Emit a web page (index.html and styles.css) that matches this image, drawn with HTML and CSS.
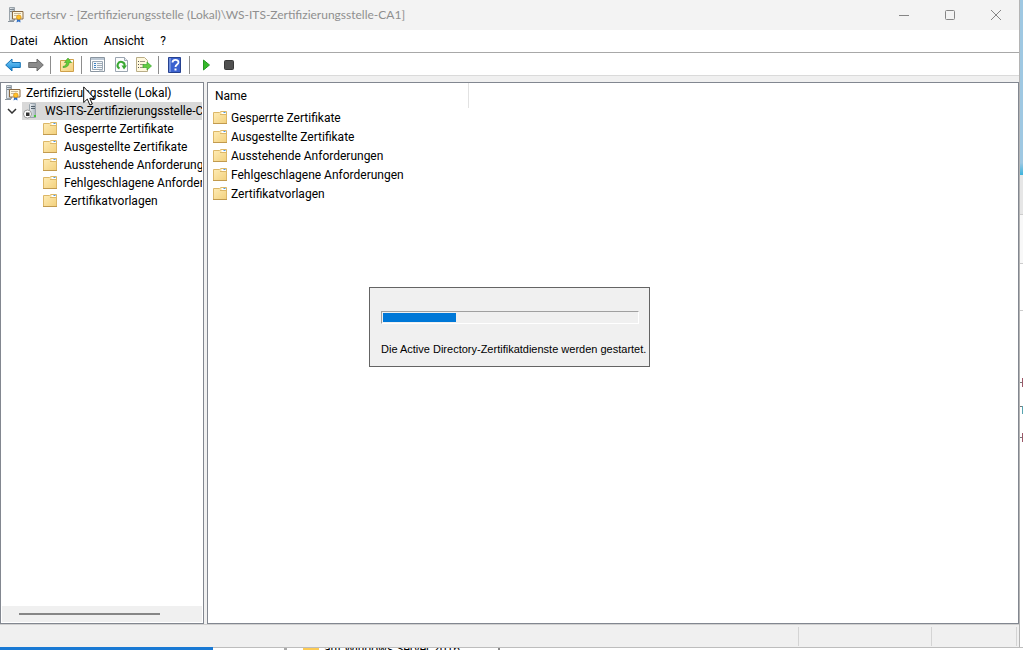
FILE: index.html
```html
<!DOCTYPE html>
<html lang="de">
<head>
<meta charset="utf-8">
<meta name="viewport" content="width=device-width, initial-scale=1">
<title>certsrv</title>
<link rel="stylesheet" href="styles.css">
</head>
<body>
<svg class="sprite" aria-hidden="true">
  <defs>
    <linearGradient id="gold" x1="0" y1="0" x2="1" y2="1"><stop offset="0" stop-color="#ffedb8"/><stop offset="1" stop-color="#f2d07c"/></linearGradient>
    <linearGradient id="azure" x1="0" y1="0" x2="0" y2="1"><stop offset="0" stop-color="#7fd0fa"/><stop offset="1" stop-color="#0f84d6"/></linearGradient>
    <linearGradient id="steel" x1="0" y1="0" x2="1" y2="0"><stop offset="0" stop-color="#eef2f5"/><stop offset="1" stop-color="#a9b3bc"/></linearGradient>
    <symbol id="folder" viewBox="0 0 16 16">
      <path d="M1.500 13.500v-11h6l1.500-1h5.500v12z" fill="url(#gold)" stroke="#dcb768"/>
      <path d="M8 4.500h6" stroke="#dcb768"/>
      <path d="M9.500 3h4.500" stroke="#fff" stroke-width="2"/>
      <path d="M11.500 2.500h2" stroke="#4d9be0"/>
      <path d="M1 13.500h14" stroke="#c19a4e"/>
    </symbol>
    <symbol id="authority" viewBox="0 0 16 16">
      <path d="M1.500 .5h5v13h-5z" fill="url(#steel)" stroke="#9aa3aa"/>
      <path d="M2 2.500h4M2 4.500h4" stroke="#7a858e"/>
      <path d="M0 14.500h6" stroke="#8a949c"/>
      <path d="M4.500 4.500h10.500v7.500h-10.500z" fill="#fff7df" stroke="#8a6b45"/>
      <path d="M6 6.500h7M6 8.500h3" stroke="#c5b79c"/>
      <path d="M9.500 11l-1 4.500 2-1 2 1-.5-4.500z" fill="#2f70c8"/>
      <circle cx="10.800" cy="10.300" r="2.300" fill="#ffc229" stroke="#d98d12" stroke-width=".7"/>
    </symbol>
    <symbol id="server" viewBox="0 0 16 16">
      <path d="M6.500 1.500l1-1h5v14h-6z" fill="url(#steel)" stroke="#9aa5ad"/>
      <path d="M8 3.500h4M8 5.500h4" stroke="#53616c"/>
      <path d="M11 12h2v2h-2z" fill="#47c838"/>
      <circle cx="4.500" cy="11" r="4" fill="#fff" stroke="#9a9a9a"/>
      <path d="M3 9.500h3.500V13H3z" fill="#333"/>
    </symbol>
    <symbol id="arrow" viewBox="0 0 16 14">
      <path d="M.7 7L7 1v3.500h8.300v5H7V13z" stroke-width="1" stroke-linejoin="round"/>
    </symbol>
    <symbol id="up-folder" viewBox="0 0 16 16">
      <path d="M1.500 14.500v-11H7l1-1h6.500v12z" fill="url(#gold)" stroke="#cfa04a"/>
      <path d="M11 4h3" stroke="#fff" stroke-width="2"/>
      <path d="M4 9.500c2.500-.5 3.500-2 3.500-4h-2L9 1l3.500 4.500H10c0 3-2 5-6 5z" fill="#64cf35" stroke="#37952a" stroke-width=".6"/>
    </symbol>
    <symbol id="properties" viewBox="0 0 16 16">
      <path d="M.5 .5h14v14H.5z" fill="#fff" stroke="#8b96a1"/>
      <path d="M1 2h13" stroke="#bcc8d4" stroke-width="2"/>
      <path d="M2.500 4.500h10v8h-10z" fill="#f4f7fa" stroke="#9ba8b5"/>
      <path d="M4 6.500h2M4 8.500h2M4 10.500h2" stroke="#3c82c4"/>
      <path d="M7 6.500h5M7 8.500h5M7 10.500h5M9 14h4" stroke="#a2adb7"/>
    </symbol>
    <symbol id="refresh" viewBox="0 0 16 16">
      <path d="M2.500 .5h9l3 3v11h-12z" fill="#fbfcfd" stroke="#9ba5b0"/>
      <path d="M11.500 .5v3h3" fill="#e7ebef" stroke="#9ba5b0"/>
      <path d="M6.500 11.500a3.500 3.500 0 1 1 5-2.500" fill="none" stroke="#38a832" stroke-width="2"/>
      <path d="M8.500 8.500h5.500l-3 4z" fill="#38a832"/>
    </symbol>
    <symbol id="export" viewBox="0 0 16 16">
      <path d="M.5 .5h8l3 3v11H.5z" fill="#fff8dd" stroke="#b9ad87"/>
      <path d="M2 4.500h1M2 7.500h1M2 10.500h1" stroke="#555"/>
      <path d="M4 4.500h5M4 7.500h4M4 10.500h4" stroke="#9d967f"/>
      <path d="M7 7.500h4V5l4.500 4-4.500 4v-2.500H7z" fill="#66cc40" stroke="#38a832" stroke-width=".7"/>
    </symbol>
    <symbol id="help" viewBox="0 0 16 16">
      <path d="M1.500 .5h12v15h-12z" fill="#3c62cf" stroke="#26418f"/>
      <path d="M2 1h2v14H2z" fill="#6f8fde"/>
      <path d="M5.500 5.500c0-3.500 6-3.500 6-.3 0 2.300-3 2.300-3 4.800" fill="none" stroke="#fff" stroke-width="1.800"/>
      <path d="M7.500 11.500h2v2h-2z" fill="#fff"/>
    </symbol>
  </defs>
</svg>

<div class="desktop">
  <main class="window">
    <header class="titlebar">
      <svg class="icon"><use href="#authority"/></svg>
      <h1 class="title">certsrv - [Zertifizierungsstelle (Lokal)\WS-ITS-Zertifizierungsstelle-CA1]</h1>
      <div class="captions">
        <button class="caption" aria-label="Minimieren"><svg viewBox="0 0 12 12"><path d="M1 6.500h10"/></svg></button>
        <button class="caption" aria-label="Maximieren"><svg viewBox="0 0 12 12"><rect x="1.500" y="1.500" width="9" height="9" rx="1"/></svg></button>
        <button class="caption" aria-label="Schließen"><svg viewBox="0 0 12 12"><path d="M1 1l10 10M11 1L1 11"/></svg></button>
      </div>
    </header>

    <nav class="menubar">
      <button class="menu">Datei</button>
      <button class="menu">Aktion</button>
      <button class="menu">Ansicht</button>
      <button class="menu">?</button>
    </nav>

    <div class="toolbar" role="toolbar">
      <button class="tool" aria-label="Zurück"><svg class="arrow back"><use href="#arrow"/></svg></button>
      <button class="tool" aria-label="Vorwärts"><svg class="arrow forward"><use href="#arrow"/></svg></button>
      <span class="divider"></span>
      <button class="tool" aria-label="Eine Ebene nach oben"><svg class="icon"><use href="#up-folder"/></svg></button>
      <span class="divider"></span>
      <button class="tool" aria-label="Eigenschaften"><svg class="icon"><use href="#properties"/></svg></button>
      <button class="tool" aria-label="Aktualisieren"><svg class="icon"><use href="#refresh"/></svg></button>
      <button class="tool" aria-label="Liste exportieren"><svg class="icon"><use href="#export"/></svg></button>
      <span class="divider"></span>
      <button class="tool" aria-label="Hilfe"><svg class="icon"><use href="#help"/></svg></button>
      <span class="divider"></span>
      <button class="tool" aria-label="Dienst starten"><svg class="icon" viewBox="0 0 16 16"><path d="M5.500 3v10l6-5z" fill="#35b829" stroke="#239a20"/></svg></button>
      <button class="tool" aria-label="Dienst beenden"><svg class="icon" viewBox="0 0 16 16"><rect x="3.500" y="3.500" width="9" height="9" rx="1" fill="#505050" stroke="#383838"/></svg></button>
    </div>

    <div class="panes">
      <section class="pane tree-pane">
        <ul class="tree">
          <li><button class="node root"><svg class="icon"><use href="#authority"/></svg><span>Zertifizierungsstelle (Lokal)</span></button></li>
          <li class="branch">
            <button class="toggle" aria-label="Reduzieren"><svg viewBox="0 0 10 6"><path d="M1 1l4 4 4-4"/></svg></button>
            <button class="node selected"><svg class="icon"><use href="#server"/></svg><span>WS-ITS-Zertifizierungsstelle-CA1</span></button>
          </li>
          <li><button class="node leaf"><svg class="icon"><use href="#folder"/></svg><span>Gesperrte Zertifikate</span></button></li>
          <li><button class="node leaf"><svg class="icon"><use href="#folder"/></svg><span>Ausgestellte Zertifikate</span></button></li>
          <li><button class="node leaf"><svg class="icon"><use href="#folder"/></svg><span>Ausstehende Anforderungen</span></button></li>
          <li><button class="node leaf"><svg class="icon"><use href="#folder"/></svg><span>Fehlgeschlagene Anforderungen</span></button></li>
          <li><button class="node leaf"><svg class="icon"><use href="#folder"/></svg><span>Zertifikatvorlagen</span></button></li>
        </ul>
        <div class="scrollbar"><div class="thumb"></div></div>
      </section>

      <section class="pane list-pane">
        <table class="list">
          <thead><tr><th scope="col">Name</th></tr></thead>
          <tbody>
            <tr><td><div class="item"><svg class="icon"><use href="#folder"/></svg>Gesperrte Zertifikate</div></td></tr>
            <tr><td><div class="item"><svg class="icon"><use href="#folder"/></svg>Ausgestellte Zertifikate</div></td></tr>
            <tr><td><div class="item"><svg class="icon"><use href="#folder"/></svg>Ausstehende Anforderungen</div></td></tr>
            <tr><td><div class="item"><svg class="icon"><use href="#folder"/></svg>Fehlgeschlagene Anforderungen</div></td></tr>
            <tr><td><div class="item"><svg class="icon"><use href="#folder"/></svg>Zertifikatvorlagen</div></td></tr>
          </tbody>
        </table>
      </section>
    </div>

    <footer class="statusbar">
      <span class="status"></span>
      <span class="status"></span>
      <span class="status"></span>
    </footer>
  </main>

  <aside class="behind-right">
    <div class="sky"></div>
    <div class="tabs"></div>
    <div class="ribbon"></div>
    <div class="rule"></div>
    <div class="sheet"><i class="mark"></i><i class="mark short"></i><i class="mark"></i></div>
  </aside>

  <div class="behind-bottom">
    <div class="accent"></div>
    <div class="explorer"><span class="slash"></span><span class="swatch"></span><span>auf Windows Server 2016</span><span class="stub"></span></div>
  </div>
</div>

<div class="dialog" role="dialog" aria-labelledby="progress-label">
  <progress class="progress" max="1000" value="286" aria-labelledby="progress-label"></progress>
  <p class="message" id="progress-label">Die Active Directory-Zertifikatdienste werden gestartet.</p>
</div>

<svg class="cursor" viewBox="0 0 12 20" aria-hidden="true"><path d="M.7 .9v15.600l3.600-3.400 2.600 5.900 2.400-1-2.500-5.700h4.600z" fill="#fff" stroke="#111" stroke-linejoin="round"/></svg>
</body>
</html>
```

FILE: styles.css
```css
* { box-sizing: border-box; }

body {
  margin: 0;
  height: 100vh;
  overflow: hidden;
  position: relative;
  background: #fff;
  color: #000;
  font: 12px/18px Roboto, "Noto Sans", sans-serif;
}

button {
  margin: 0;
  padding: 0;
  border: 0;
  background: none;
  color: inherit;
  font: inherit;
}

.sprite { position: absolute; width: 0; height: 0; }
.icon { width: 16px; height: 16px; flex: none; }

.desktop {
  display: grid;
  grid-template: minmax(0, 1fr) 3px / minmax(0, 1fr) 4px;
  height: 100%;
}

.window {
  display: flex;
  flex-direction: column;
  background: #f0f0f0;
}

/* Title bar */
.titlebar {
  display: flex;
  align-items: center;
  height: 30px;
  padding-left: 8px;
  background: #f3f3f3;
}
.title {
  flex: 1;
  margin: 0 0 0 6px;
  color: #8f8f8f;
  font: 12px/18px Lato, "Open Sans", sans-serif;
  white-space: nowrap;
}
.captions { display: flex; }
.caption { width: 46px; height: 28px; display: grid; place-items: center; }
.caption svg { width: 12px; height: 12px; fill: none; stroke: #858585; }

/* Menu */
.menubar {
  display: flex;
  gap: 16px;
  height: 23px;
  padding-left: 10px;
  background: #fff;
  border-bottom: 1px solid #a8a8a8;
}

/* Toolbar */
.toolbar {
  display: flex;
  align-items: center;
  height: 23px;
  padding: 2px 0 0 1px;
  background: #fff;
  border-bottom: 1px solid #dadada;
}
.tool { width: 23px; height: 20px; display: grid; place-items: center; }
.arrow { width: 16px; height: 14px; }
.back { fill: url(#azure); stroke: #1773b5; }
.forward { fill: #8b8b8b; stroke: #6d6d6d; transform: scaleX(-1); }
.divider { width: 1px; height: 18px; margin: 0 4px 0 3px; background: #8d8d8d; }

/* Panes */
.panes {
  flex: 1;
  min-height: 0;
  display: grid;
  grid-template-columns: 204px minmax(0, 1fr);
  gap: 3px;
  padding-top: 6px;
}
.pane { background: #fff; border: 1px solid #828790; overflow: hidden; }
.tree-pane { display: flex; flex-direction: column; padding: 1px; }

.tree { flex: 1; margin: 0; padding: 0; list-style: none; overflow: hidden; }
.node {
  display: flex;
  align-items: center;
  width: 100%;
  height: 18px;
  gap: 6px;
  overflow: hidden;
  white-space: nowrap;
}
.root { padding-left: 3px; gap: 5px; }
.leaf { padding-left: 40px; }
.branch { display: flex; }
.toggle { flex: none; width: 20px; display: grid; place-items: center; }
.toggle svg { width: 10px; height: 6px; fill: none; stroke: #333; stroke-width: 1.5; }
.selected { background: #d9d9d9; padding-left: 1px; }

.scrollbar { height: 16px; padding: 7px 42px 7px 17px; background: #f0f0f0; }
.thumb { height: 2px; background: #868686; }

/* List */
.list { border-collapse: collapse; }
.list th {
  width: 260px;
  height: 25px;
  padding: 0 7px;
  border-right: 1px solid #e2e2e2;
  font-weight: 400;
  text-align: left;
}
.list td { padding: 0 4px; }
.item { display: flex; align-items: center; gap: 3px; height: 19px; white-space: nowrap; }

/* Status bar */
.statusbar {
  display: grid;
  grid-template-columns: minmax(0, 1fr) 133px 85px;
  height: 23px;
  padding: 2px 2px 1px 0;
  border-top: 1px solid #d0d0d0;
}
.status { border-right: 1px solid #d4d4d4; }

/* Windows behind */
.behind-right { display: flex; flex-direction: column; border-left: 1px solid #b4b4b4; }
.sky { height: 175px; background: linear-gradient(#9fc8e2 93%, #3bb3dc); }
.tabs { height: 40px; background: #e6e6e6; border-bottom: 1px solid #ccc; }
.ribbon { height: 49px; background: #f8f8f8; border-bottom: 1px solid #ccc; }
.rule { height: 47px; border-bottom: 1px solid #ccc; }
.sheet { display: flex; flex-direction: column; gap: 19px; padding-top: 67px; }
.mark { height: 9px; border-right: 1px solid #9b5868; background: linear-gradient(#777, #777) center / 100% 1px no-repeat; }
.mark.short { height: 8px; border-color: #57a4b0; background-position: top; }

.behind-bottom { grid-column: 1 / -1; display: flex; overflow: hidden; }
.accent { width: 213px; background: #1979d4; }
.explorer {
  flex: 1;
  display: flex;
  height: 3px;
  overflow: hidden;
  border-top: 1px solid #bdbdbd;
  line-height: 2px;
  white-space: nowrap;
}
.slash { width: 3px; margin: 0 16px 0 71px; background: #aaa; }
.swatch { width: 16px; margin-right: 5px; background: #fccb55; }
.stub { width: 2px; margin-left: 38px; background: #888; }

/* Progress dialog */
.dialog {
  position: absolute;
  left: 369px;
  top: 287px;
  width: 281px;
  padding: 23px 11px 8px;
  background: #f0f0f0;
  border: 1px solid #646464;
}
.progress {
  appearance: none;
  display: block;
  width: 258px;
  height: 13px;
  padding: 1px;
  background: #f0f0f0;
  border: 1px solid;
  border-color: #a0a0a0 #fff #fff #a0a0a0;
}
.progress::-webkit-progress-bar { background: #f0f0f0; }
.progress::-webkit-progress-value { background: #0078d7; }
.message {
  margin: 16px 0 0;
  font: 11px/18px "Liberation Sans", Arial, sans-serif;
  white-space: nowrap;
}

.cursor { position: absolute; left: 83px; top: 86px; width: 12px; height: 20px; }
```
